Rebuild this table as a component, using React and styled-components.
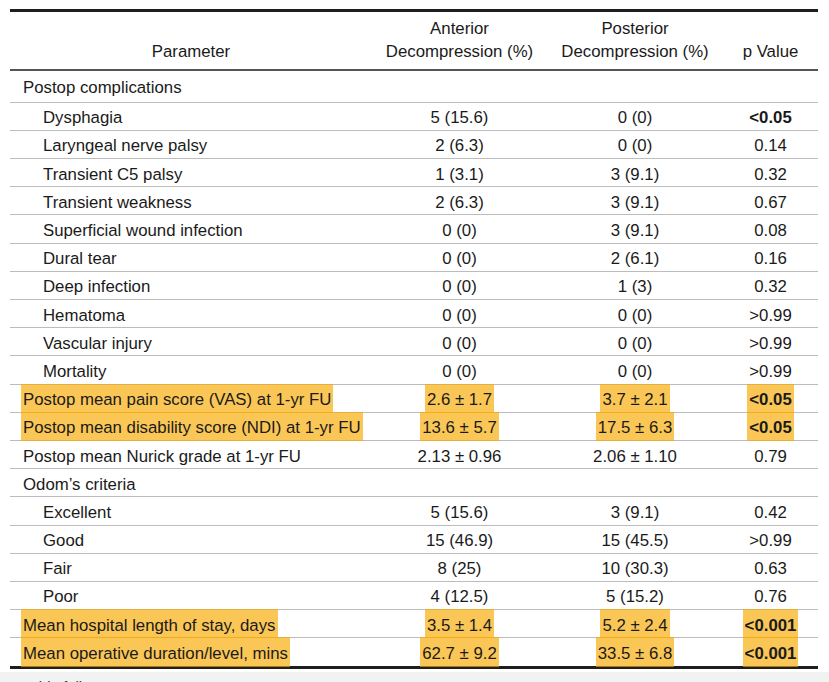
import styled, { createGlobalStyle } from 'styled-components';

const GlobalStyle = createGlobalStyle`
	html, body {
		margin: 0;
		padding: 0;
		background: #fff;
	}
	body {
		font-family: "Liberation Sans", Arial, sans-serif;
		color: #1a1a1a;
	}
`

const COLS = '362px 175px 176px 95px';

const Table = styled.div`
	width: 808px;
	margin: 9px 0 0 10px;
	border-top: 3px solid #1e1e1e;
	border-bottom: 3px solid #1e1e1e;
	font-size: 16.8px;
`

const HeadRow = styled.div`
	display: grid;
	grid-template-columns: ${COLS};
	height: 59px;
	box-sizing: border-box;
	padding: 3px 0 6px;
	border-bottom: 2px solid #555;
`

const HeadCell = styled.div`
	display: flex;
	flex-direction: column;
	justify-content: flex-end;
	align-items: center;
	text-align: center;
	line-height: 23px;
`

const Row = styled.div`
	display: grid;
	grid-template-columns: ${COLS};
	height: ${props => props.tall ? '31.7px' : '28.2px'};
	box-sizing: border-box;
	border-bottom: ${props => props.last ? 'none' : '1px solid #bcbcbc'};
`

const Cell = styled.div`
	display: flex;
	align-items: stretch;
	justify-content: ${props => props.label ? 'flex-start' : 'center'};
	padding-left: ${props => props.label ? (props.indent ? '31px' : '11px') : '0'};
	white-space: nowrap;
`

const Mark = styled.span`
	display: flex;
	align-items: center;
	padding: ${props => props.shift || 4}px 2px 0;
	margin: -1px 0 -1px;
	font-weight: ${props => props.bold ? 700 : 400};
	background: ${props => props.hl ? 'rgba(247, 170, 0, 0.66)' : 'transparent'};
`

const Footer = styled.div`
	margin-top: 3px;
	height: 12px;
	overflow: hidden;
	background: #f2f2f2;
	padding: 6px 0 0 23px;
	font-size: 15px;
	color: #333;
	line-height: 18px;
`

const rows = [
	{ label: 'Postop complications', section: true },
	{ label: 'Dysphagia', indent: true, a: '5 (15.6)', p: '0 (0)', pv: '<0.05', bold: true },
	{ label: 'Laryngeal nerve palsy', indent: true, a: '2 (6.3)', p: '0 (0)', pv: '0.14' },
	{ label: 'Transient C5 palsy', indent: true, a: '1 (3.1)', p: '3 (9.1)', pv: '0.32' },
	{ label: 'Transient weakness', indent: true, a: '2 (6.3)', p: '3 (9.1)', pv: '0.67' },
	{ label: 'Superficial wound infection', indent: true, a: '0 (0)', p: '3 (9.1)', pv: '0.08' },
	{ label: 'Dural tear', indent: true, a: '0 (0)', p: '2 (6.1)', pv: '0.16' },
	{ label: 'Deep infection', indent: true, a: '0 (0)', p: '1 (3)', pv: '0.32' },
	{ label: 'Hematoma', indent: true, a: '0 (0)', p: '0 (0)', pv: '>0.99' },
	{ label: 'Vascular injury', indent: true, a: '0 (0)', p: '0 (0)', pv: '>0.99' },
	{ label: 'Mortality', indent: true, a: '0 (0)', p: '0 (0)', pv: '>0.99' },
	{ label: 'Postop mean pain score (VAS) at 1-yr FU', a: '2.6 ± 1.7', p: '3.7 ± 2.1', pv: '<0.05', bold: true, hl: true },
	{ label: 'Postop mean disability score (NDI) at 1-yr FU', a: '13.6 ± 5.7', p: '17.5 ± 6.3', pv: '<0.05', bold: true, hl: true },
	{ label: 'Postop mean Nurick grade at 1-yr FU', a: '2.13 ± 0.96', p: '2.06 ± 1.10', pv: '0.79' },
	{ label: 'Odom\u2019s criteria', section: true },
	{ label: 'Excellent', indent: true, a: '5 (15.6)', p: '3 (9.1)', pv: '0.42' },
	{ label: 'Good', indent: true, a: '15 (46.9)', p: '15 (45.5)', pv: '>0.99' },
	{ label: 'Fair', indent: true, a: '8 (25)', p: '10 (30.3)', pv: '0.63' },
	{ label: 'Poor', indent: true, a: '4 (12.5)', p: '5 (15.2)', pv: '0.76' },
	{ label: 'Mean hospital length of stay, days', a: '3.5 ± 1.4', p: '5.2 ± 2.4', pv: '<0.001', bold: true, hl: true },
	{ label: 'Mean operative duration/level, mins', a: '62.7 ± 9.2', p: '33.5 ± 6.8', pv: '<0.001', bold: true, hl: true },
]

export default function App() {
	return (
		<>
			<GlobalStyle />
			<Table>
				<HeadRow>
					<HeadCell>Parameter</HeadCell>
					<HeadCell><span>Anterior</span><span>Decompression (%)</span></HeadCell>
					<HeadCell><span>Posterior</span><span>Decompression (%)</span></HeadCell>
					<HeadCell>p Value</HeadCell>
				</HeadRow>
				{rows.map((r, i) => (
					<Row key={r.label} tall={i === 0} last={i === rows.length - 1}>
						<Cell label indent={r.indent}>
							<Mark hl={r.hl} shift={i === 0 ? 3 : 4}>{r.label}</Mark>
						</Cell>
						<Cell><Mark hl={r.hl}>{r.a}</Mark></Cell>
						<Cell><Mark hl={r.hl}>{r.p}</Mark></Cell>
						<Cell><Mark hl={r.hl} bold={r.bold}>{r.pv}</Mark></Cell>
					</Row>
				))}
			</Table>
			<Footer>Table follows</Footer>
		</>
	);
}
